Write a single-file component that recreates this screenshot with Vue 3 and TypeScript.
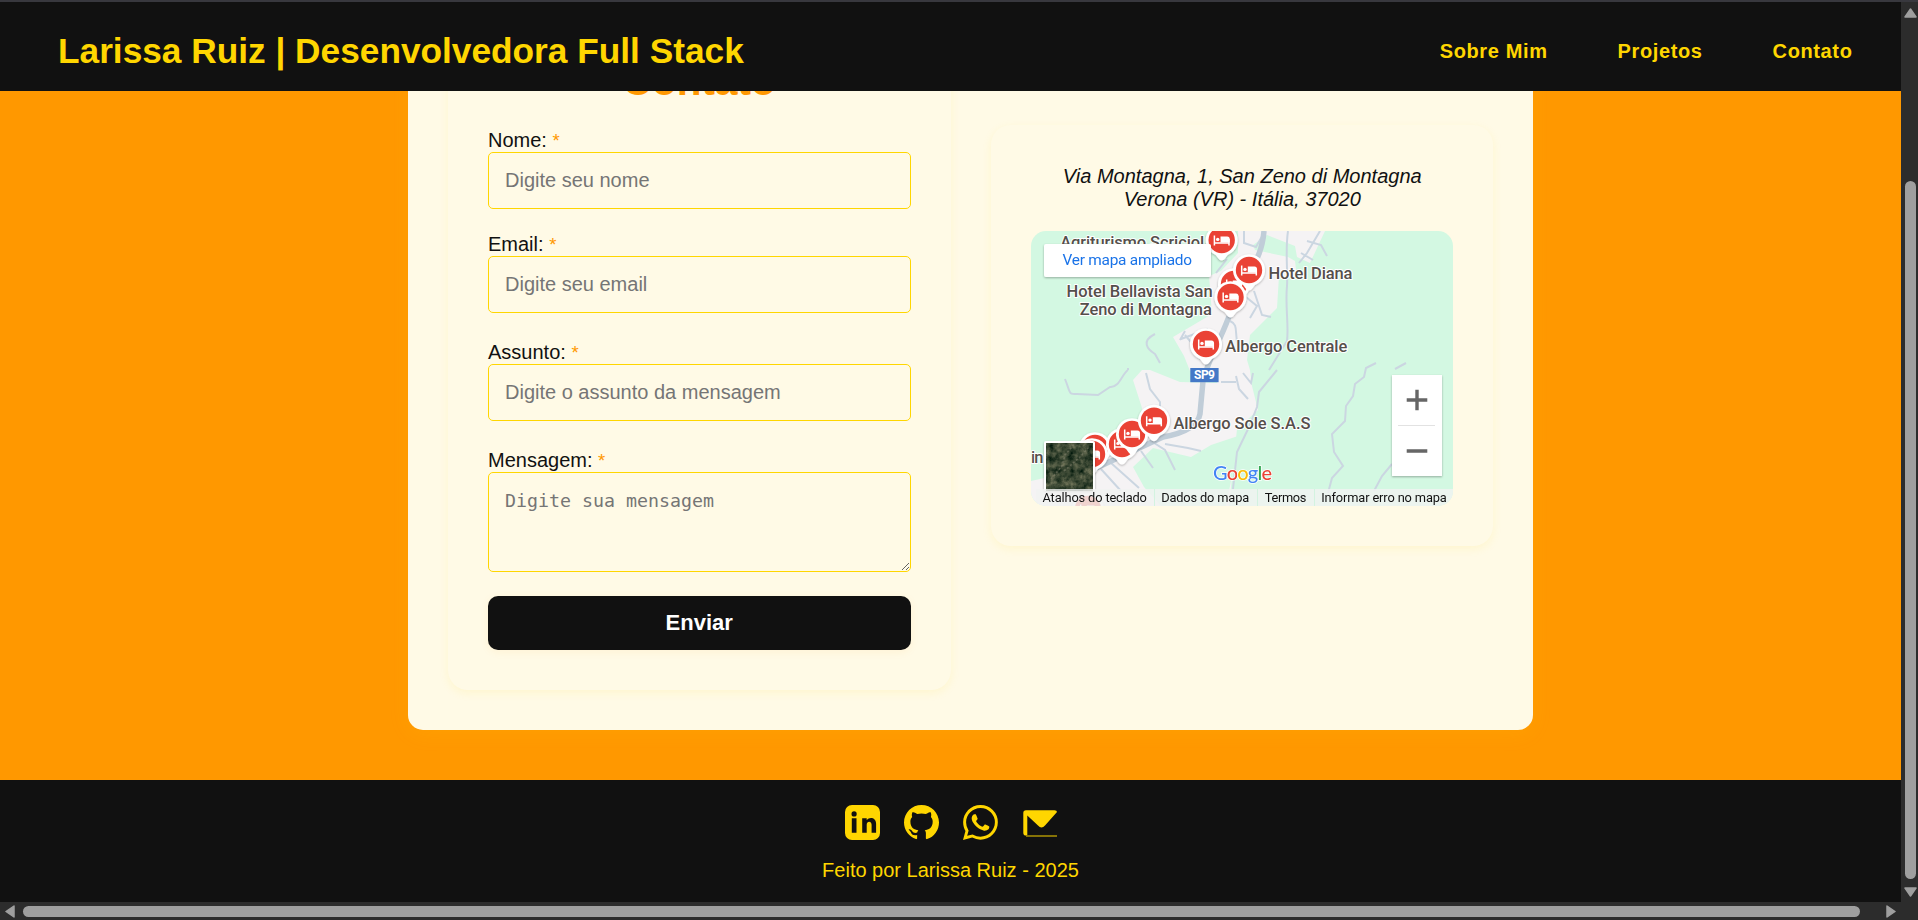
<script setup lang="ts">
interface Field {
  id: string
  label: string
  placeholder: string
}
interface Pin {
  x: number
  y: number
}
interface MapLabel {
  text: string
  x: number
  y: number
  width: number
}

const links: string[] = ['Sobre Mim', 'Projetos', 'Contato']

const fields: Field[] = [
  { id: 'nome', label: 'Nome:', placeholder: 'Digite seu nome' },
  { id: 'email', label: 'Email:', placeholder: 'Digite seu email' },
  { id: 'assunto', label: 'Assunto:', placeholder: 'Digite o assunto da mensagem' },
]

const pins: Pin[] = [
  { x: 190.7, y: 9 },
  { x: 203, y: 53 },
  { x: 218, y: 39 },
  { x: 199.5, y: 66 },
  { x: 175, y: 113 },
  { x: 64, y: 217 },
  { x: 61, y: 223 },
  { x: 91, y: 213 },
  { x: 101, y: 203 },
  { x: 123, y: 189.7 },
  { x: 57, y: 278 },
]

const places: MapLabel[] = [
  { text: 'Agriturismo Scriciol', x: 29.2, y: 16.7, width: 144 },
  { text: 'Hotel Bellavista San', x: 35.6, y: 66.2, width: 146 },
  { text: 'Zeno di Montagna', x: 48.8, y: 84.2, width: 132 },
  { text: 'Hotel Diana', x: 237.4, y: 48, width: 84 },
  { text: 'Albergo Centrale', x: 194.3, y: 121.3, width: 122 },
  { text: 'Albergo Sole S.A.S', x: 142.4, y: 198.3, width: 137 },
  { text: 'in', x: 0, y: 231.7, width: 12.4 },
]

const legal: MapLabel[] = [
  { text: 'Atalhos do teclado', x: 11.5, y: 271.2, width: 104.4 },
  { text: 'Dados do mapa', x: 130.2, y: 271.2, width: 88 },
  { text: 'Termos', x: 233.8, y: 271.2, width: 41.6 },
  { text: 'Informar erro no mapa', x: 290.2, y: 271.2, width: 125.6 },
]
</script>

<template>
  <div class="window">
    <div class="page">
      <header class="header">
        <h1>Larissa Ruiz | Desenvolvedora Full Stack</h1>
        <nav>
          <a v-for="link in links" :key="link">{{ link }}</a>
        </nav>
      </header>

      <main class="main">
        <section class="panel">
          <form class="box form" @submit.prevent>
            <h2>Contato</h2>
            <div v-for="field in fields" :key="field.id" class="field" :class="field.id">
              <label :for="field.id">{{ field.label }} <span>*</span></label>
              <input :id="field.id" type="text" :placeholder="field.placeholder" />
            </div>
            <div class="field mensagem">
              <label for="mensagem">Mensagem: <span>*</span></label>
              <textarea id="mensagem" placeholder="Digite sua mensagem"></textarea>
            </div>
            <button type="submit">Enviar</button>
          </form>

          <div class="box place">
            <address>Via Montagna, 1, San Zeno di Montagna<br />Verona (VR) - Itália, 37020</address>
            <svg class="map" viewBox="0 0 422 275" width="422" height="275">
              <defs>
                <g id="pin">
                  <path d="M0 20.500C-2.600 20.500-3.600 17.600-6 15A16 16 0 1 1 6 15C3.600 17.600 2.600 20.500 0 20.500Z" fill="#fff" />
                  <circle r="13.200" fill="#ea4335" />
                  <path d="M-7.300-4.500V5.500M7.300-1V5.500M-7.300 3H7.300" stroke="#fff" stroke-width="1.500" fill="none" />
                  <circle cx="-4" cy="-.6" r="1.700" fill="#fff" />
                  <path d="M-1.200-3.500H5.500Q8-3.500 8-1V2.400H-1.200Z" fill="#fff" />
                </g>
                <filter id="shade" x="-30%" y="-30%" width="160%" height="170%">
                  <feDropShadow dx="0" dy="1" stdDeviation="1.300" flood-color="#000" flood-opacity=".3" />
                </filter>
                <filter id="forest" x="0" y="0" width="100%" height="100%" color-interpolation-filters="sRGB">
                  <feTurbulence type="fractalNoise" baseFrequency=".16" numOctaves="4" seed="8" />
                  <feColorMatrix values=".6 0 0 0 -.07  .5 0 0 0 .03  .42 0 0 0 -.01  0 0 0 0 1" />
                </filter>
              </defs>
              <rect width="422" height="275" fill="#d3f8e2" />
              <path fill="#f5f3f4" d="M207 0H294L279 32L266 26L264 15L236 4L222 14L224 19L257 26L264 30L266 47L248 45L246 77L219 104L216 129L219 139L221 155L227 179L206 198L202 237L198 275H0V250L62 236L110 190L111 177L102 149L111 139L119 139L149 151L186 152L188 140H159L153 125L142 106L181 83L178 45L190 40L207 22Z" />
              <path d="M122 217L102 236L113 256L130 275H195L203 235L207 205L180 214L160 226Z" fill="#d3f8e2" />
              <g fill="none" stroke="#cbd6e1" stroke-width="2">
                <path d="M257 0C254 20 257 40 256 55C254 75 258 95 256 110L238 139" />
                <path d="M289 0L276 22L268 32M276 10L290 14L296 25M270 22L282 29" />
                <path d="M213 0V12L225 16L234 0M196 28L185 42M223 60L231 84L240 86M215 66L226 75L219 87M199 90C208 94 203 100 207 116" />
                <path d="M124 103C110 110 116 118 124 123L129 132M154 100L149 109M150 108L177 98M164 116L154 104" />
                <path d="M34 148C40 163 37 163 46 163L67 164L79 156C88 157 91 143 97 139M97 137V139M115 142L119 158L129 171V185" />
                <path d="M246 139L228 161L226 176L218 196L206 221L202 258" />
                <path d="M345 132L335 137L333 146L324 153L322 165L315 175L314 190L301 203L303 221L312 235L301 247L297 262M361 233L351 245L343 260M375 132L364 138" />
                <path d="M120 210L134 219L144 239M134 213L157 217L170 220M110 220L122 237M80 232L108 257M70 238L90 260" />
                <path d="M205 145L208 158L217 168M212 142L220 152L222 142M190 151L205 151" />
              </g>
              <path d="M233 0C231 24 222 34 213 52L197 88C188 112 177 129 172 150L169 183Q166 200 132 206L63 238" fill="none" stroke="#c0cdd8" stroke-width="5.500" />
              <rect x="159.300" y="137" width="28.300" height="14.200" fill="#4478c7" />
              <text class="route" x="163" y="148.400" textLength="21">SP9</text>
              <g class="places">
                <text v-for="p in places" :key="p.text" :x="p.x" :y="p.y" :textLength="p.width">{{ p.text }}</text>
              </g>
              <g filter="url(#shade)">
                <use v-for="(pin, i) in pins" :key="i" href="#pin" :x="pin.x" :y="pin.y" />
              </g>
              <text class="google" x="182" y="248.500" textLength="59">
                <tspan fill="#4285f4">G</tspan><tspan fill="#ea4335">o</tspan><tspan fill="#fbbc05">o</tspan><tspan fill="#4285f4">g</tspan><tspan fill="#34a853">l</tspan><tspan fill="#ea4335">e</tspan>
              </text>
              <g filter="url(#shade)">
                <rect x="13" y="210" width="51" height="50" rx="2" fill="#fff" />
                <rect x="13" y="13" width="167" height="33" rx="2" fill="#fff" />
                <rect x="361" y="144" width="50" height="101" fill="#fff" />
              </g>
              <rect x="15" y="212" width="47" height="48" filter="url(#forest)" />
              <path d="M20 248L31 235L34 224L44 212M33 240L49 226L58 216" fill="none" stroke="#8a8874" stroke-opacity=".5" stroke-width="1.600" stroke-dasharray="2 2" />
              <rect x="5" y="258" width="417" height="17" fill="#f1f3f2" fill-opacity=".82" />
              <path d="M123.500 258V275M226.500 258V275M283.500 258V275" stroke="#d3f3e0" />
              <g class="legal">
                <text v-for="l in legal" :key="l.text" :x="l.x" :y="l.y" :textLength="l.width">{{ l.text }}</text>
              </g>
              <text class="enlarge" x="31.500" y="34.300" textLength="129.500">Ver mapa ampliado</text>
              <path d="M386 158.700V179.300M375.700 169H396.300M375.700 220H396.300" stroke="#666" stroke-width="3.400" />
              <path d="M367 194.500H404" stroke="#e2e2e2" />
            </svg>
          </div>
        </section>
      </main>

      <footer class="footer">
        <div class="social">
          <svg viewBox="0 0 35 35" width="35" height="35">
            <path fill-rule="evenodd" d="M7 0H28A7 7 0 0 1 35 7V28A7 7 0 0 1 28 35H7A7 7 0 0 1 0 28V7A7 7 0 0 1 7 0ZM6.800 13.300V27.800H11.500V13.300ZM9.100 6.300A2.600 2.600 0 1 0 9.100 11.500A2.600 2.600 0 1 0 9.100 6.300ZM17.200 13.300V27.800H21.700V19.800C21.700 15.700 26.600 15.800 26.600 19.800V27.800H31.100V18.800C31.100 12.500 24.500 11.500 21.700 15.200V13.300Z" />
          </svg>
          <svg viewBox="0 0 16 16" width="35" height="35">
            <path d="M8 0C3.580 0 0 3.580 0 8c0 3.540 2.290 6.530 5.470 7.590.4.07.55-.17.55-.38 0-.19-.01-.82-.01-1.490-2.010.37-2.530-.49-2.690-.94-.09-.23-.48-.94-.82-1.130-.28-.15-.68-.52-.01-.53.63-.01 1.080.58 1.230.82.72 1.210 1.870.87 2.330.66.07-.52.28-.87.51-1.070-1.780-.2-3.640-.89-3.640-3.950 0-.87.31-1.590.82-2.150-.08-.2-.36-1.020.08-2.120 0 0 .67-.21 2.200.82.64-.18 1.320-.27 2-.27s1.360.09 2 .27c1.530-1.040 2.200-.82 2.200-.82.44 1.100.16 1.920.08 2.120.51.56.82 1.270.82 2.150 0 3.070-1.870 3.750-3.650 3.950.29.25.54.73.54 1.480 0 1.070-.01 1.930-.01 2.200 0 .21.15.46.55.38A8.010 8.010 0 0 0 16 8c0-4.420-3.580-8-8-8" />
          </svg>
          <svg viewBox="0 0 16 16" width="35" height="35">
            <path d="M13.601 2.326A7.850 7.850 0 0 0 7.994 0C3.627 0 .068 3.558.064 7.926c0 1.399.366 2.760 1.057 3.965L0 16l4.204-1.102a7.900 7.900 0 0 0 3.790.965h.004c4.368 0 7.926-3.558 7.930-7.930A7.900 7.900 0 0 0 13.600 2.326zM7.994 14.521a6.600 6.600 0 0 1-3.356-.92l-.24-.144-2.494.654.666-2.433-.156-.251a6.560 6.560 0 0 1-1.007-3.505c0-3.626 2.957-6.584 6.591-6.584a6.560 6.560 0 0 1 4.660 1.931 6.560 6.560 0 0 1 1.928 4.660c-.004 3.639-2.961 6.592-6.592 6.592m3.615-4.934c-.197-.099-1.170-.578-1.353-.646-.182-.065-.315-.099-.445.099-.133.197-.513.646-.627.775-.114.133-.232.148-.43.05-.197-.1-.836-.308-1.592-.985-.59-.525-.985-1.175-1.103-1.372-.114-.198-.011-.304.088-.403.087-.088.197-.232.296-.346.1-.114.133-.198.198-.33.065-.134.034-.248-.015-.347-.05-.099-.445-1.076-.612-1.470-.16-.389-.323-.335-.445-.34-.114-.007-.247-.007-.38-.007a.73.73 0 0 0-.529.247c-.182.198-.691.677-.691 1.654s.71 1.916.81 2.049c.098.133 1.394 2.132 3.383 2.992.47.205.84.326 1.129.418.475.152.904.129 1.246.08.38-.058 1.171-.48 1.338-.943.164-.464.164-.86.114-.943-.049-.084-.182-.133-.38-.232" />
          </svg>
          <svg viewBox="0 0 35 35" width="35" height="35">
            <path d="M4 5.300H32.500Q35 5.300 35 7L23 20.500Q19.500 24.500 16 20.500L5.300 10.500V30.500Q1.300 31 1.300 28V8Q1.300 5.300 4 5.300Z" />
            <path d="M4 31H35" fill="none" stroke="#a38b06" stroke-width="1.600" />
          </svg>
        </div>
        <p>Feito por Larissa Ruiz - 2025</p>
      </footer>
    </div>

    <div class="bar vertical">
      <svg viewBox="0 0 13 10" width="13" height="10"><path d="M6.500 1L12 9H1Z" /></svg>
      <i></i>
      <svg viewBox="0 0 13 10" width="13" height="10"><path d="M6.500 9L1 1H12Z" /></svg>
    </div>
    <div class="bar horizontal">
      <svg viewBox="0 0 10 13" width="10" height="13"><path d="M1 6.500L9 1V12Z" /></svg>
      <i></i>
      <svg viewBox="0 0 10 13" width="10" height="13"><path d="M9 6.500L1 1V12Z" /></svg>
    </div>
  </div>
</template>

<style>
body {
  margin: 0;
  overflow: hidden;
}
</style>

<style scoped>
* {
  box-sizing: border-box;
}
.window {
  width: 1918px;
  height: 920px;
  border-top: 2px solid #38383e;
  display: grid;
  grid-template-columns: 1901px 17px;
  grid-template-rows: 900px 18px;
  background: #2c2c2c;
  font-family: 'Liberation Sans', Arial, sans-serif;
  font-size: 20px;
  line-height: 23px;
  color: #111;
}
.page {
  display: flex;
  flex-direction: column;
  overflow: hidden;
}
.header {
  height: 89px;
  flex: none;
  background: #111;
  color: #ffd600;
  display: flex;
  align-items: center;
  justify-content: space-between;
  padding: 8px 48.5px 0 58px;
}
h1 {
  margin: 0;
  font-size: 35.25px;
  line-height: 40px;
  white-space: nowrap;
}
nav {
  display: flex;
  gap: 70px;
  padding-top: 2px;
  font-weight: bold;
  letter-spacing: 0.625px;
}
.main {
  height: 689px;
  flex: none;
  overflow: hidden;
  background: #ff9800;
  display: flex;
  align-items: flex-end;
  justify-content: center;
  padding: 0 0 50px 40px;
}
.panel {
  width: 1125px;
  flex: none;
  padding: 40px;
  border-radius: 15px;
  background: #fffae6;
  box-shadow: 0 4px 20px rgba(255, 214, 0, 0.1);
  display: flex;
  gap: 40px;
  align-items: flex-end;
}
.box {
  width: 502.5px;
  padding: 40px;
  border-radius: 20px;
  box-shadow: 0 3px 10px rgba(255, 214, 0, 0.1);
}
h2 {
  margin: 0 0 25px;
  font-size: 40.6px;
  line-height: 46px;
  text-align: center;
  color: #ff9800;
}
.form {
  display: flex;
  flex-direction: column;
}
.field {
  display: flex;
  flex-direction: column;
}
.nome {
  margin-bottom: 24px;
}
.email,
.assunto {
  margin-bottom: 28px;
}
label span {
  font-size: 18.5px;
  color: #ff9800;
}
input,
textarea {
  width: 100%;
  height: 57px;
  margin: 0;
  padding: 0 16px;
  border: 1px solid #ffd600;
  border-radius: 5px;
  background: #fffae6;
  font: 20px 'Liberation Sans', Arial, sans-serif;
}
textarea {
  height: 100px;
  padding: 17px 16px;
  font: 18.27px/22px 'DejaVu Sans Mono', monospace;
  resize: vertical;
}
input::placeholder,
textarea::placeholder {
  color: #757575;
  opacity: 1;
}
button {
  height: 54px;
  margin-top: 24px;
  border: 0;
  border-radius: 10px;
  background: #111;
  color: #fff;
  font: bold 22px 'Liberation Sans', Arial, sans-serif;
  box-shadow: 0 2px 8px rgba(255, 152, 0, 0.08);
}
.place {
  margin-bottom: 144px;
}
address {
  margin-bottom: 20px;
  padding-left: 1px;
  text-align: center;
  white-space: nowrap;
}
.map {
  display: block;
  border-radius: 15px;
  font-family: Roboto, sans-serif;
}
.places text {
  font-size: 16.5px;
  font-weight: 500;
  fill: #554f4b;
  stroke: #fff;
  stroke-width: 2px;
  stroke-linejoin: round;
  paint-order: stroke;
}
.route {
  font-size: 12px;
  font-weight: 700;
  fill: #fff;
}
.google {
  font-family: Lato, sans-serif;
  font-size: 20px;
  font-weight: 500;
  stroke: #fff;
  stroke-width: 1.5px;
  paint-order: stroke;
}
.legal text {
  font-size: 12.8px;
  fill: #111;
}
.enlarge {
  font-size: 15.4px;
  fill: #1a73e8;
}
.footer {
  flex: 1;
  background: #111;
  color: #ffd600;
  display: flex;
  flex-direction: column;
  align-items: center;
  padding-top: 25px;
}
.social {
  display: flex;
  gap: 24px;
}
.social svg {
  display: block;
  fill: #ffd600;
}
.footer p {
  margin: 19px 0 0;
}
.bar {
  display: flex;
  align-items: center;
}
.bar svg {
  flex: none;
  fill: #9f9f9f;
  stroke: #9f9f9f;
  stroke-width: 1.5px;
  stroke-linejoin: round;
}
.bar i {
  background: #9f9f9f;
  border-radius: 6px;
}
.vertical {
  flex-direction: column;
  padding: 6px 0 5px 2px;
}
.vertical i {
  width: 11px;
  height: 698px;
  margin: 163px 0 8px;
}
.horizontal {
  padding: 1px 0 0 5px;
}
.horizontal i {
  width: 1837px;
  height: 11px;
  margin: 0 26px 0 8px;
}
</style>
